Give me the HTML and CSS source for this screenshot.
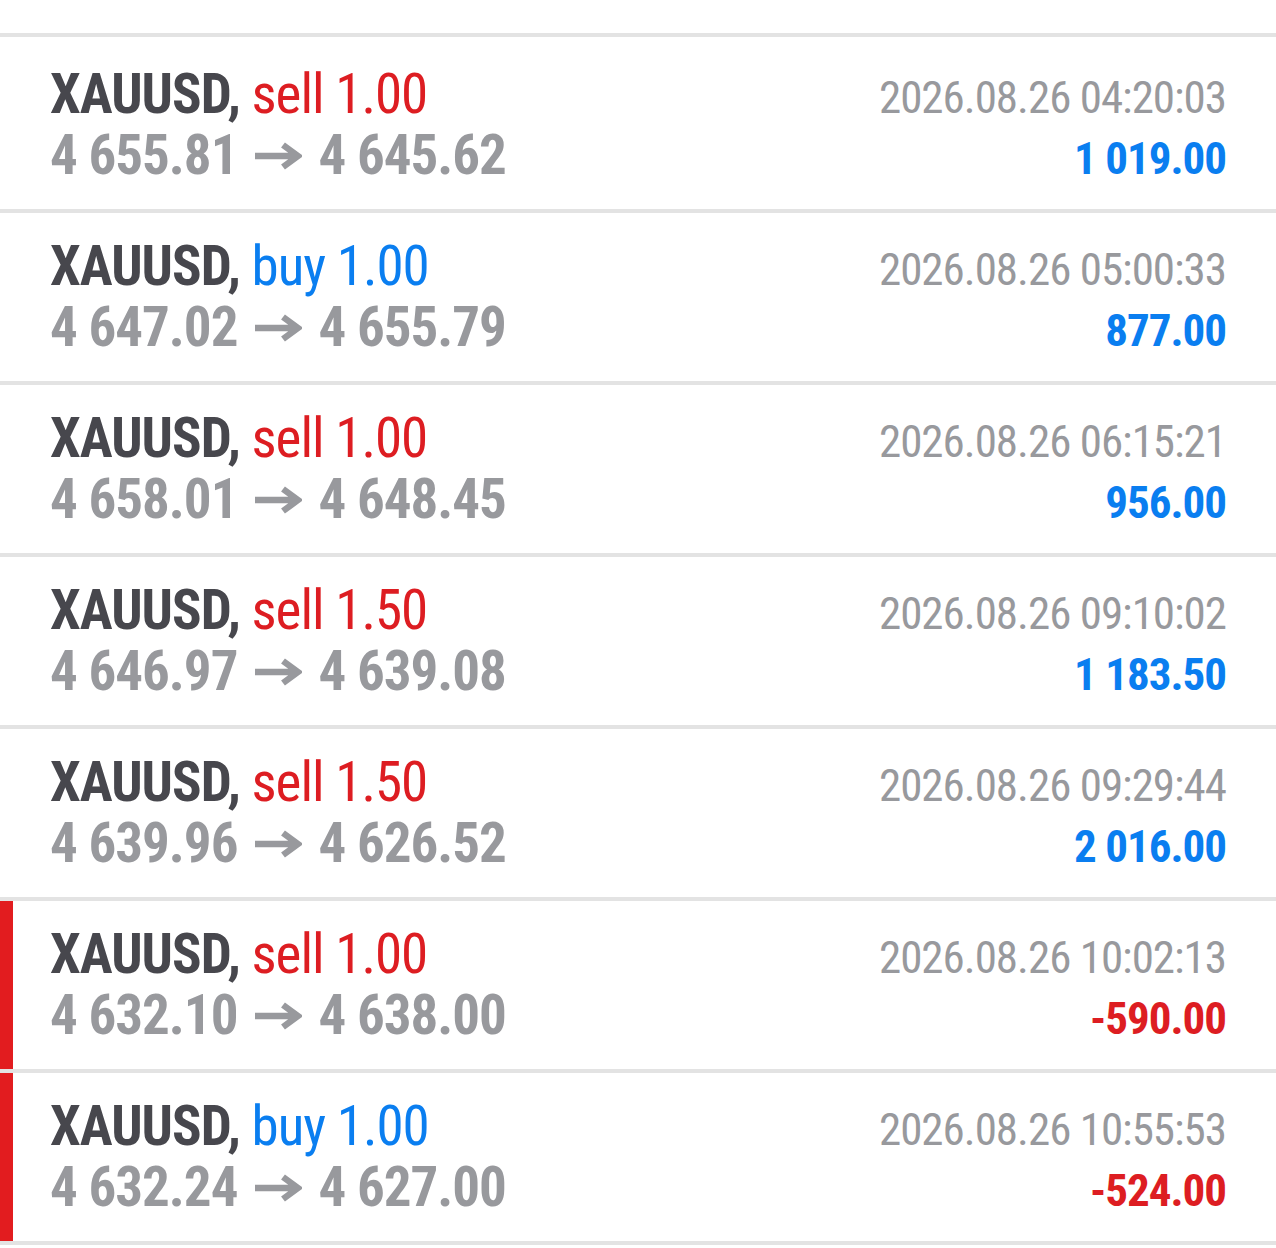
FILE: index.html
```html
<!DOCTYPE html>
<html lang="en">
<head>
    <meta charset="UTF-8">
    <meta name="viewport" content="width=device-width, initial-scale=1.0">
    <title>History</title>
    <link rel="stylesheet" href="styles.css">
</head>
<body>

    <div class="top"></div>

    <ul class="deals">
        <li class="deal">
            <div class="title"><span class="sym">XAUUSD,</span> <span class="sell">sell 1.00</span></div>
            <div class="time">2026.08.26 04:20:03</div>
            <div class="prices">4 655.81<svg class="arrow" viewBox="0 0 49 28"><path d="M2 14H44M30 3L45 14L30 25"/></svg>4 645.62</div>
            <div class="profit">1 019.00</div>
        </li>
        <li class="deal">
            <div class="title"><span class="sym">XAUUSD,</span> <span class="buy">buy 1.00</span></div>
            <div class="time">2026.08.26 05:00:33</div>
            <div class="prices">4 647.02<svg class="arrow" viewBox="0 0 49 28"><path d="M2 14H44M30 3L45 14L30 25"/></svg>4 655.79</div>
            <div class="profit">877.00</div>
        </li>
        <li class="deal">
            <div class="title"><span class="sym">XAUUSD,</span> <span class="sell">sell 1.00</span></div>
            <div class="time">2026.08.26 06:15:21</div>
            <div class="prices">4 658.01<svg class="arrow" viewBox="0 0 49 28"><path d="M2 14H44M30 3L45 14L30 25"/></svg>4 648.45</div>
            <div class="profit">956.00</div>
        </li>
        <li class="deal">
            <div class="title"><span class="sym">XAUUSD,</span> <span class="sell">sell 1.50</span></div>
            <div class="time">2026.08.26 09:10:02</div>
            <div class="prices">4 646.97<svg class="arrow" viewBox="0 0 49 28"><path d="M2 14H44M30 3L45 14L30 25"/></svg>4 639.08</div>
            <div class="profit">1 183.50</div>
        </li>
        <li class="deal">
            <div class="title"><span class="sym">XAUUSD,</span> <span class="sell">sell 1.50</span></div>
            <div class="time">2026.08.26 09:29:44</div>
            <div class="prices">4 639.96<svg class="arrow" viewBox="0 0 49 28"><path d="M2 14H44M30 3L45 14L30 25"/></svg>4 626.52</div>
            <div class="profit">2 016.00</div>
        </li>
        <li class="deal loss">
            <div class="title"><span class="sym">XAUUSD,</span> <span class="sell">sell 1.00</span></div>
            <div class="time">2026.08.26 10:02:13</div>
            <div class="prices">4 632.10<svg class="arrow" viewBox="0 0 49 28"><path d="M2 14H44M30 3L45 14L30 25"/></svg>4 638.00</div>
            <div class="profit">-590.00</div>
        </li>
        <li class="deal loss">
            <div class="title"><span class="sym">XAUUSD,</span> <span class="buy">buy 1.00</span></div>
            <div class="time">2026.08.26 10:55:53</div>
            <div class="prices">4 632.24<svg class="arrow" viewBox="0 0 49 28"><path d="M2 14H44M30 3L45 14L30 25"/></svg>4 627.00</div>
            <div class="profit">-524.00</div>
        </li>
    </ul>

</body>
</html>
```

FILE: styles.css
```css
body {
    margin: 0;
    background-color: white;
    font-family: "Roboto Condensed", Roboto, "Liberation Sans", sans-serif;
    letter-spacing: -1px;
}
.top {
    height: 33px;
    border-bottom: 4px solid #e3e3e3;
}
.deals {
    list-style: none;
    margin: 0;
    padding: 0;
}
.deal {
    position: relative;
    display: grid;
    grid-template-columns: 1fr auto;
    grid-template-rows: 61px 61px;
    align-items: baseline;
    padding: 23px 50px 23px 50px;
    border-bottom: 4px solid #e3e3e3;
}
.deal:first-child {
    padding-top: 27px;
}
.loss::before {
    content: "";
    position: absolute;
    left: 0;
    top: 0;
    bottom: 0;
    width: 13px;
    background-color: #e21c1f;
}
.title, .prices {
    font-size: 55px;
    line-height: 61px;
    white-space: nowrap;
}
.sym {
    font-weight: bold;
    color: #47474d;
}
.sell {
    color: #dd1d22;
}
.buy {
    color: #0a7ef0;
}
.prices {
    font-weight: bold;
    color: #98999d;
}
.arrow {
    width: 49px;
    height: 28px;
    margin: 0 16px 0 16px;
    vertical-align: 4px;
}
.arrow path {
    fill: none;
    stroke: #98999d;
    stroke-width: 6.5;
}
.time, .profit {
    font-size: 45px;
    line-height: 61px;
    text-align: right;
    white-space: nowrap;
}
.time {
    color: #98999d;
}
.profit {
    font-weight: bold;
    color: #0a7ef0;
}
.loss .profit {
    color: #dd1d22;
}
```
